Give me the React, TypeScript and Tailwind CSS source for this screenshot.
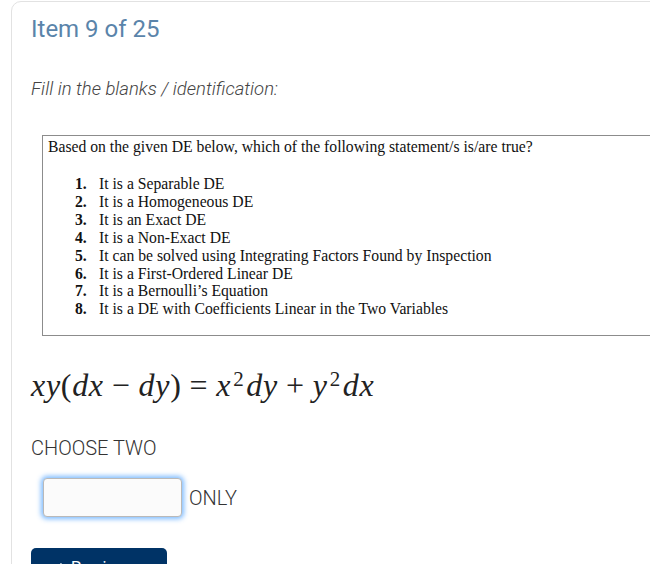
import { ChevronLeft } from 'lucide-react';

const statements = [
  'It is a Separable DE',
  'It is a Homogeneous DE',
  'It is an Exact DE',
  'It is a Non-Exact DE',
  'It can be solved using Integrating Factors Found by Inspection',
  'It is a First-Ordered Linear DE',
  'It is a Bernoulli\u2019s Equation',
  'It is a DE with Coefficients Linear in the Two Variables',
];

export default function App() {
  return (
    <div className="min-h-screen w-full bg-white overflow-hidden pl-[11px] pt-[1px] font-['Roboto',sans-serif]">
      <div className="w-[700px] h-[620px] border border-[#e2e2e2] rounded-[10px] pl-[19px] pt-[15px]">
        {/* header */}
        <h2 className="text-[24px] leading-[24px] text-[#5a84aa] font-normal">Item 9 of 25</h2>

        <p className="mt-[37px] text-[18.5px] leading-[22px] italic font-light text-[#444]">
          Fill in the blanks / identification:
        </p>

        {/* question image */}
        <div className="mt-[35px] ml-[11px] h-[201px] border border-[#8c8c8c] pl-[5px] pt-[2px] font-['Liberation_Serif',serif] text-[15.7px] text-[#111]">
          <div className="leading-[18px]">Based on the given DE below, which of the following statement/s is/are true?</div>
          <div className="mt-[19px] pl-[27px]">
            {statements.map((s, i) => (
              <div key={i} className="flex leading-[17.9px]">
                <span className="w-[24px] font-bold">{i + 1}.</span>
                <span>{s}</span>
              </div>
            ))}
          </div>
        </div>

        {/* equation */}
        <div className="mt-[29px] font-['Liberation_Serif',serif] text-[32px] leading-[40px] text-[#222] tracking-[0.7px]">
          <i>xy</i>(<i>dx</i>
          <span className="mx-[8px]">−</span>
          <i>dy</i>)<span className="mx-[8px]">=</span>
          <i>x</i>
          <sup className="text-[21px] -top-[10px] mx-[2px]">2</sup>
          <i>dy</i>
          <span className="mx-[8px]">+</span>
          <i>y</i>
          <sup className="text-[21px] -top-[10px] mx-[2px]">2</sup>
          <i>dx</i>
        </div>

        <div className="mt-[32px] text-[20px] leading-[22px] font-light text-[#333]">CHOOSE TWO</div>

        <div className="mt-[19px] ml-[12px] flex items-center gap-[7px]">
          <input
            type="text"
            className="w-[139px] h-[39px] rounded-[4px] border border-[#b9b9b9] bg-[#fbfbfb] shadow-[0_0_5px_2px_rgba(102,175,255,0.85)] outline-none px-2"
          />
          <span className="text-[20px] font-light text-[#333]">ONLY</span>
        </div>

        <button className="mt-[31px] flex items-start gap-1 h-[40px] w-[136px] rounded-[5px] bg-[#003366] pl-[20px] pt-[8px] text-white text-[16px] leading-[24px]">
          <ChevronLeft className="w-4 h-4 mt-[4px]" strokeWidth={2.5} />
          Previous
        </button>
      </div>
    </div>
  );
}
